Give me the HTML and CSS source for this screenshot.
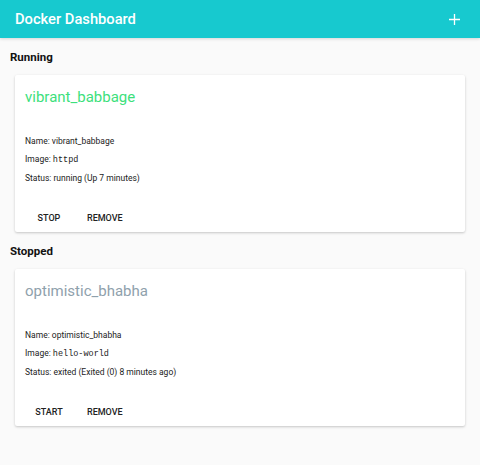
FILE: index.html
```html
<!DOCTYPE html>
<html>
<head>
<meta charset="utf-8">
<link rel="stylesheet" href="styles.css">
</head>
<body>
<header class="appbar">
  <h1 class="appbar-title">Docker Dashboard</h1>
  <svg class="add-icon" width="11" height="11" viewBox="0 0 11 11"><path d="M5.5 0V11M0 5.5H11" stroke="#fff" stroke-width="1.3"/></svg>
</header>
<main class="content">
  <h2 class="section-title">Running</h2>
  <section class="card">
    <div class="card-title running">vibrant_babbage</div>
    <div class="card-body">
      <p>Name: vibrant_babbage</p>
      <p>Image: <code>httpd</code></p>
      <p>Status: running (Up 7 minutes)</p>
    </div>
    <div class="card-actions">
      <button class="btn">Stop</button>
      <button class="btn">Remove</button>
    </div>
  </section>
  <h2 class="section-title">Stopped</h2>
  <section class="card">
    <div class="card-title stopped">optimistic_bhabha</div>
    <div class="card-body">
      <p>Name: optimistic_bhabha</p>
      <p>Image: <code>hello-world</code></p>
      <p>Status: exited (Exited (0) 8 minutes ago)</p>
    </div>
    <div class="card-actions">
      <button class="btn">Start</button>
      <button class="btn">Remove</button>
    </div>
  </section>
</main>
</body>
</html>
```
FILE: styles.css
```css
* { box-sizing: border-box; }
html, body { margin: 0; padding: 0; }
body {
  background: #fafafa;
  font-family: Roboto, "Liberation Sans", sans-serif;
  color: #212121;
  width: 480px;
  height: 465px;
  overflow: hidden;
}
.appbar {
  height: 38px;
  background: #17c9cf;
  display: flex;
  align-items: center;
  justify-content: space-between;
  padding: 0 20px 0 15px;
  box-shadow: 0 1px 3px rgba(0,0,0,0.15);
}
.appbar-title {
  margin: 0;
  font-size: 14.7px;
  font-weight: 500;
  color: #fff;
}
.add-icon { display: block; }
.content {
  padding: 12px 15px 0 10px;
}
.section-title {
  margin: 0 0 10px 0;
  font-size: 11.5px;
  font-weight: 700;
  color: #111;
  line-height: 15px;
}
.card {
  margin: 0 0 12px 5px;
  background: #fff;
  border-radius: 2px;
  box-shadow: 0 1px 3px rgba(0,0,0,0.14), 0 1px 2px rgba(0,0,0,0.08);
  padding: 10px 10px 2px 10px;
  height: 157px;
  display: flex;
  flex-direction: column;
}
.card-title {
  font-size: 15px;
  line-height: 24px;
}
.card-title.running { color: #3ddf7c; }
.card-title.stopped { color: #8fa1ac; }
.card-body {
  margin-top: 23px;
  font-size: 8.5px;
  color: #222;
}
.card-body p {
  margin: 0;
  line-height: 18px;
}
.card-body code {
  font-family: "Liberation Mono", "DejaVu Sans Mono", monospace;
  font-size: 8.5px;
}
.card-actions {
  margin-top: auto;
  display: flex;
  gap: 8px;
  padding-left: 2px;
}
.btn {
  background: none;
  border: none;
  font-family: Roboto, "Liberation Sans", sans-serif;
  font-weight: 500;
  font-size: 9px;
  text-transform: uppercase;
  color: #222;
  padding: 0 8px;
  height: 24px;
  min-width: 44px;
}
```
